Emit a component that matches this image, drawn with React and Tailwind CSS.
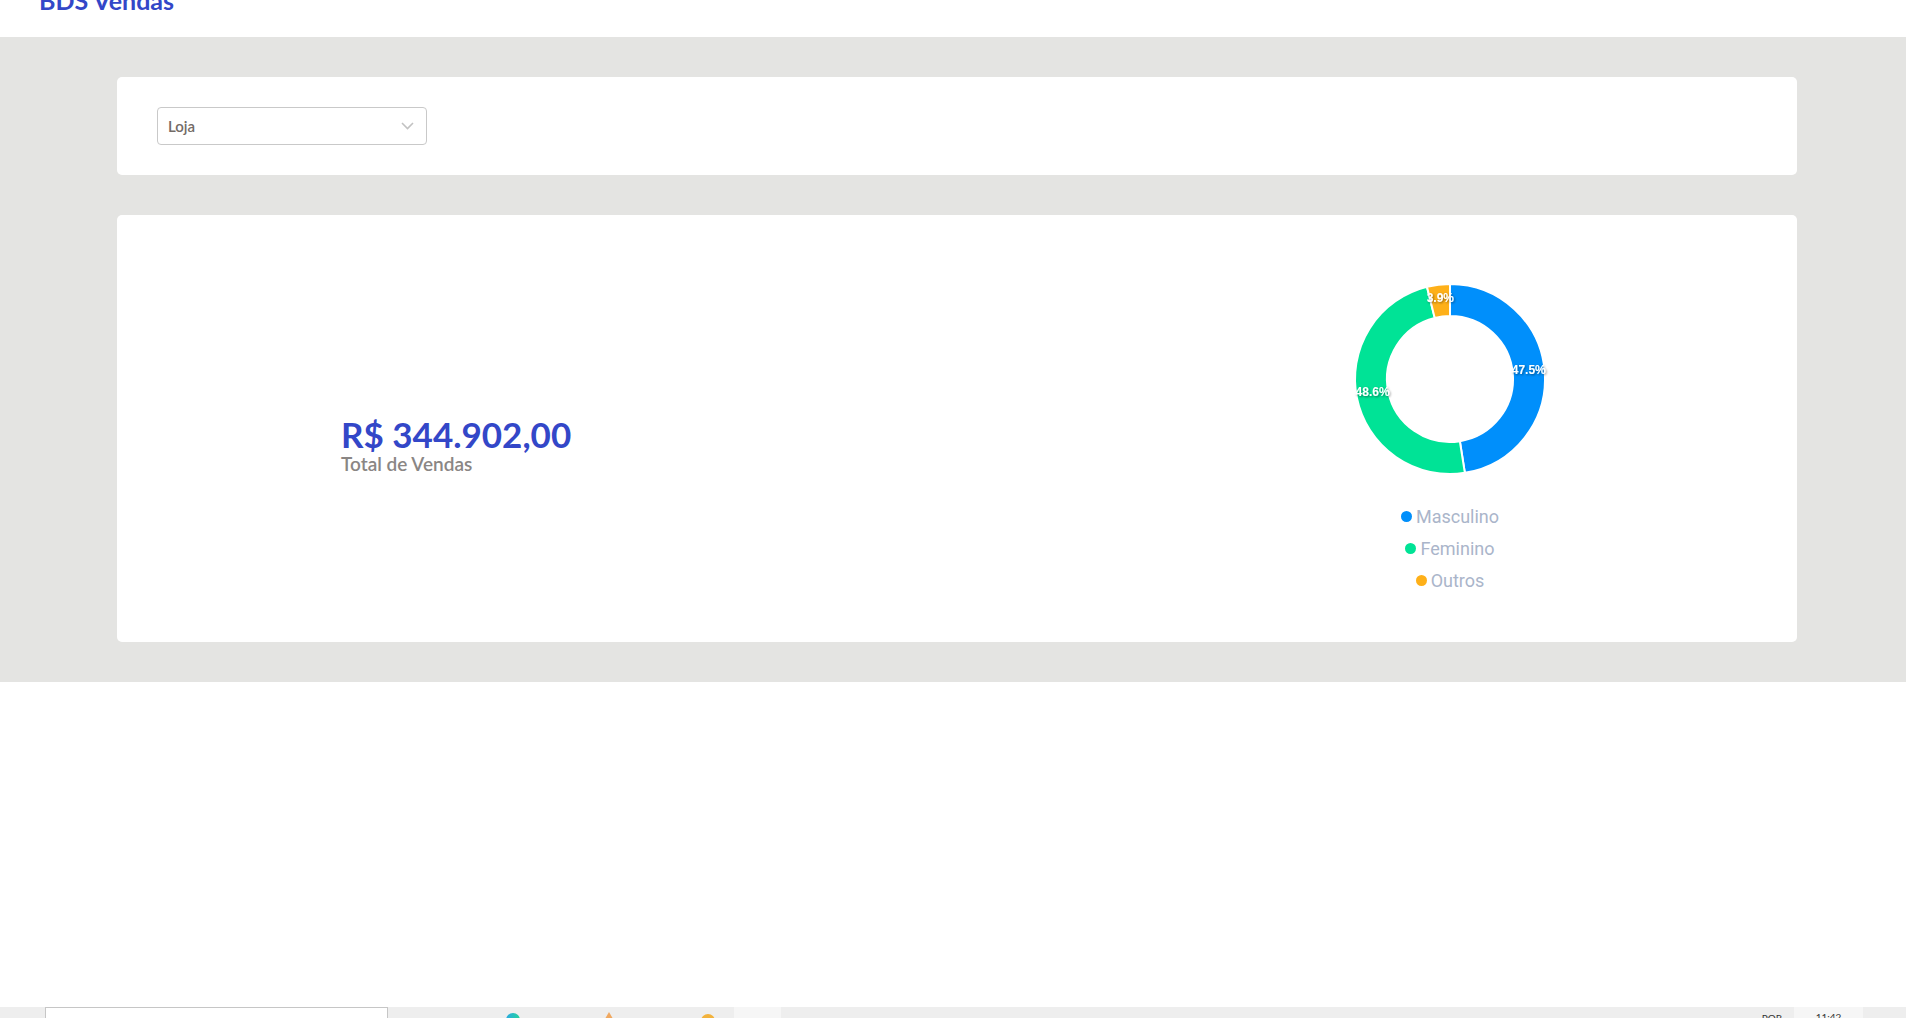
import React from 'react';

const slices = [
  { label: 'Masculino', value: 47.5, color: '#008FFB' },
  { label: 'Feminino', value: 48.6, color: '#00E396' },
  { label: 'Outros', value: 3.9, color: '#FEB019' },
];

const R_OUT = 95;
const R_IN = 63;
const C = 95;

const pt = (r, deg) => {
  const a = (deg - 90) * Math.PI / 180;
  return [C + r * Math.cos(a), C + r * Math.sin(a)];
};

const arc = (start, end) => {
  const large = end - start > 180 ? 1 : 0;
  const [x1, y1] = pt(R_OUT, start);
  const [x2, y2] = pt(R_OUT, end);
  const [x3, y3] = pt(R_IN, end);
  const [x4, y4] = pt(R_IN, start);
  return `M${x1} ${y1} A${R_OUT} ${R_OUT} 0 ${large} 1 ${x2} ${y2} L${x3} ${y3} A${R_IN} ${R_IN} 0 ${large} 0 ${x4} ${y4} Z`;
};

const Donut = () => {
  let acc = 0;
  return (
    <svg width="190" height="190" viewBox="0 0 190 190" className="overflow-visible">
      <defs>
        <filter id="lblShadow" x="-20%" y="-40%" width="140%" height="180%">
          <feDropShadow dx="1" dy="1" stdDeviation="0.8" floodColor="#000" floodOpacity="0.45" />
        </filter>
      </defs>
      {slices.map(s => {
        const start = acc * 3.6;
        acc += s.value;
        const end = acc * 3.6;
        return <path key={s.label} d={arc(start, end)} fill={s.color} stroke="#fff" strokeWidth="2" />;
      })}
      {(() => {
        let a = 0;
        return slices.map(s => {
          const mid = (a + s.value / 2) * 3.6;
          a += s.value;
          const [x, y] = pt((R_OUT + R_IN) / 2, mid);
          return (
            <text key={s.label} x={x} y={y - 3} textAnchor="middle" dominantBaseline="central" fill="#fff" fontSize="12" fontWeight="700" fontFamily="'Liberation Sans', Arial, sans-serif" filter="url(#lblShadow)">
              {s.value.toFixed(1)}%
            </text>
          );
        });
      })()}
    </svg>
  );
};

const App = () => {
  return (
    <div className="w-[1906px] h-[1018px] flex flex-col bg-white overflow-hidden font-['Lato',sans-serif]">
      {/* HEADER */}
      <div className="h-[37px] shrink-0 bg-white overflow-hidden">
        <h1 className="pl-[39px] -mt-[14px] text-[25px] leading-[28px] font-bold text-[#3347c8]">BDS Vendas</h1>
      </div>

      {/* MAIN */}
      <div className="bg-[#e4e4e2] pl-[117px] pr-[109px] py-[40px] flex flex-col gap-[40px]">
        <div className="bg-white rounded-[5px] h-[98px] px-[40px] flex items-center">
          <div className="w-[270px] h-[38px] border border-[#c9c9c9] rounded-[4px] flex items-center justify-between pl-[10px] pr-[12px]">
            <span className="text-[15px] font-semibold text-[#736b66]">Loja</span>
            <svg width="13" height="8" viewBox="0 0 13 8" fill="none">
              <path d="M1 1l5.5 5.5L12 1" stroke="#c2c2c2" strokeWidth="1.6" />
            </svg>
          </div>
        </div>

        <div className="bg-white rounded-[5px] h-[427px] flex items-start">
          <div className="ml-[224px] mt-[199px]">
            <p className="text-[35px] leading-[40px] font-bold text-[#3347c8]">R$ 344.902,00</p>
            <p className="text-[19px] leading-[20px] font-semibold text-[#8a8684]">Total de Vendas</p>
          </div>
          <div className="ml-auto mr-[197px] mt-[69px] w-[300px] flex flex-col items-center">
            <Donut />
            <div className="mt-[26px] flex flex-col items-center font-['Roboto',sans-serif]">
              {slices.map(s => (
                <div key={s.label} className="h-[32px] flex items-center gap-[4px]">
                  <span className="w-[11px] h-[11px] rounded-full" style={{ backgroundColor: s.color }} />
                  <span className="text-[18px] text-[#aab5ca]">{s.label}</span>
                </div>
              ))}
            </div>
          </div>
        </div>
      </div>

      {/* TASKBAR STRIP */}
      <div className="mt-auto h-[11px] shrink-0 bg-[#eeeeee] relative overflow-hidden font-['Liberation Sans',sans-serif]">
        <div className="flex h-full">
          <div className="ml-[45px] w-[343px] h-full bg-white border-t border-l border-r border-[#c6c6c6]" />
          <div className="ml-[118px] mt-[6px] w-[14px] h-[14px] rounded-full bg-gradient-to-r from-[#2ea8e0] to-[#28d39a]" />
          <div className="ml-[82px] mt-[5px] w-0 h-0 border-l-[7px] border-r-[7px] border-b-[12px] border-l-transparent border-r-transparent border-b-[#f0a860]" />
          <div className="ml-[85px] mt-[7px] w-[14px] h-[14px] rounded-full bg-[#f2b23c]" />
          <div className="ml-[19px] w-[47px] h-full bg-[#f6f6f6]" />
          <div className="ml-auto flex h-full">
            <span className="mt-[5px] text-[10px] leading-[12px] text-[#333]">POR</span>
            <div className="ml-[12px] w-[69px] h-full bg-[#f6f6f6] flex justify-center">
              <span className="mt-[4px] text-[10px] leading-[12px] text-[#333]">11:42</span>
            </div>
            <div className="w-[43px]" />
          </div>
        </div>
      </div>
    </div>
  );
};

export default App;
